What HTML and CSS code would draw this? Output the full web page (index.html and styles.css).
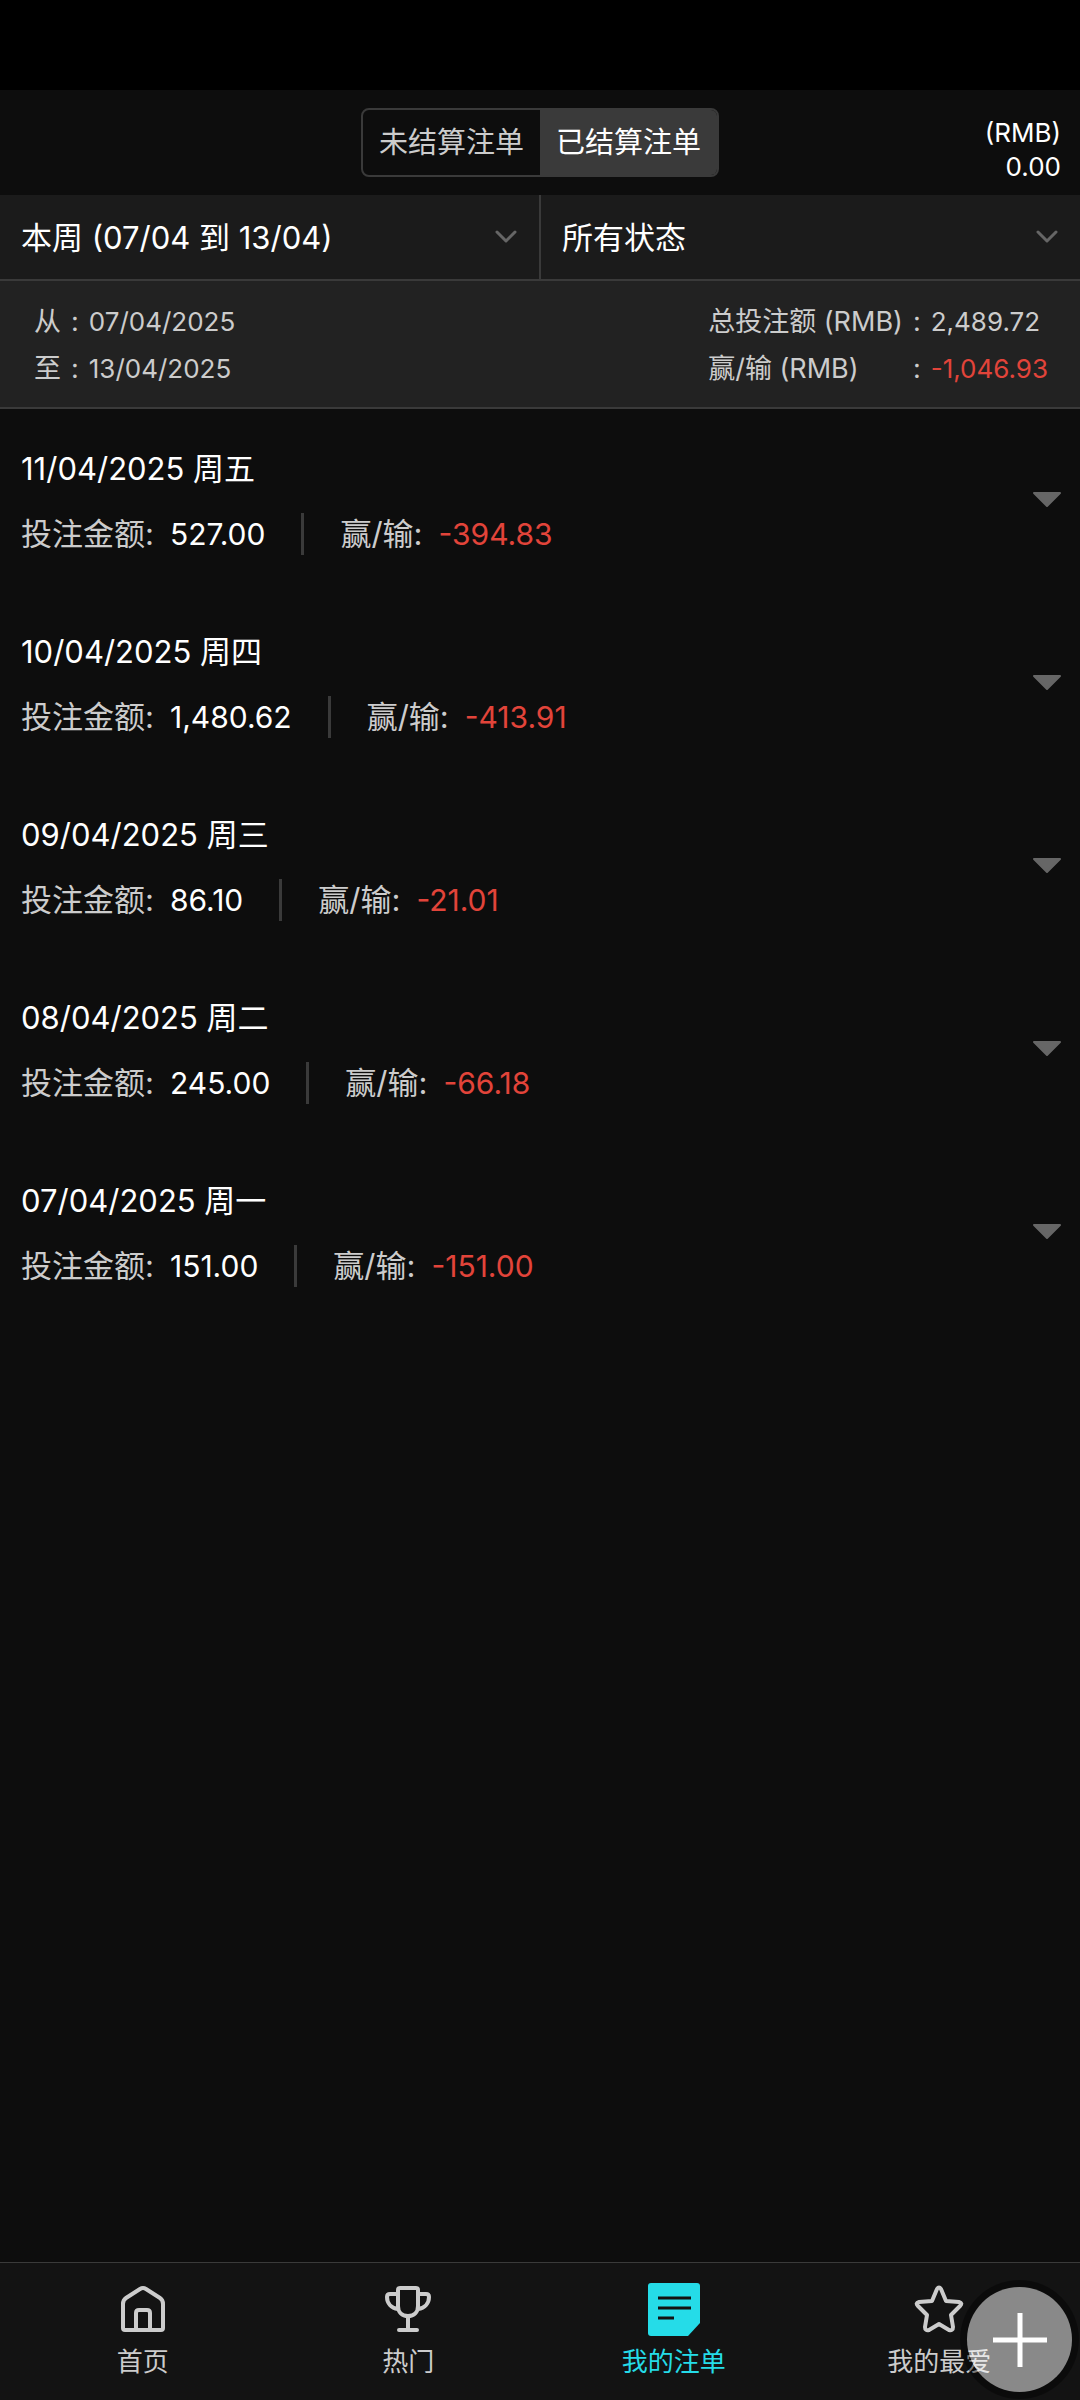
FILE: index.html
```html
<!DOCTYPE html>
<html lang="zh-CN">

<head>
    <meta charset="UTF-8">
    <meta name="viewport" content="width=device-width, initial-scale=1.0">
    <title>我的注单</title>
    <link rel="stylesheet" href="styles.css">
</head>

<body>
    <div class="status-bar"></div>

    <header class="header">
        <div class="tabs">
            <button type="button" class="tab">未结算注单</button>
            <button type="button" class="tab active">已结算注单</button>
        </div>
        <div class="balance">
            <div>(RMB)</div>
            <div>0.00</div>
        </div>
    </header>

    <div class="filters">
        <div class="filter">
            <select id="period" name="period" aria-label="日期">
                <option>本周 (07/04 到 13/04)</option>
            </select>
            <svg class="chevron" viewBox="0 0 22 14"><path d="M2 2l9 9 9-9" /></svg>
        </div>
        <div class="filter">
            <select id="status" name="status" aria-label="状态">
                <option>所有状态</option>
            </select>
            <svg class="chevron" viewBox="0 0 22 14"><path d="M2 2l9 9 9-9" /></svg>
        </div>
    </div>

    <section class="summary">
        <div class="summary-grid">
            <span>从</span><span>:</span><span class="value">07/04/2025</span>
            <span>至</span><span>:</span><span class="value">13/04/2025</span>
        </div>
        <div class="summary-grid">
            <span>总投注额 (RMB)</span><span>:</span><span class="value">2,489.72</span>
            <span>赢/输 (RMB)</span><span>:</span><span class="value loss">-1,046.93</span>
        </div>
    </section>

    <main class="list">
        <div class="day">
            <div class="day-info">
                <div class="date">11/04/2025 周五</div>
                <div class="amounts">
                    <span class="label">投注金额:</span>
                    <span class="amount">527.00</span>
                    <span class="line"></span>
                    <span class="label">赢/输:</span>
                    <span class="amount loss">-394.83</span>
                </div>
            </div>
            <button type="button" class="expand" aria-label="展开">
                <svg viewBox="0 0 28 16"><path d="M1 1h26L14 14z" /></svg>
            </button>
        </div>

        <div class="day">
            <div class="day-info">
                <div class="date">10/04/2025 周四</div>
                <div class="amounts">
                    <span class="label">投注金额:</span>
                    <span class="amount">1,480.62</span>
                    <span class="line"></span>
                    <span class="label">赢/输:</span>
                    <span class="amount loss">-413.91</span>
                </div>
            </div>
            <button type="button" class="expand" aria-label="展开">
                <svg viewBox="0 0 28 16"><path d="M1 1h26L14 14z" /></svg>
            </button>
        </div>

        <div class="day">
            <div class="day-info">
                <div class="date">09/04/2025 周三</div>
                <div class="amounts">
                    <span class="label">投注金额:</span>
                    <span class="amount">86.10</span>
                    <span class="line"></span>
                    <span class="label">赢/输:</span>
                    <span class="amount loss">-21.01</span>
                </div>
            </div>
            <button type="button" class="expand" aria-label="展开">
                <svg viewBox="0 0 28 16"><path d="M1 1h26L14 14z" /></svg>
            </button>
        </div>

        <div class="day">
            <div class="day-info">
                <div class="date">08/04/2025 周二</div>
                <div class="amounts">
                    <span class="label">投注金额:</span>
                    <span class="amount">245.00</span>
                    <span class="line"></span>
                    <span class="label">赢/输:</span>
                    <span class="amount loss">-66.18</span>
                </div>
            </div>
            <button type="button" class="expand" aria-label="展开">
                <svg viewBox="0 0 28 16"><path d="M1 1h26L14 14z" /></svg>
            </button>
        </div>

        <div class="day">
            <div class="day-info">
                <div class="date">07/04/2025 周一</div>
                <div class="amounts">
                    <span class="label">投注金额:</span>
                    <span class="amount">151.00</span>
                    <span class="line"></span>
                    <span class="label">赢/输:</span>
                    <span class="amount loss">-151.00</span>
                </div>
            </div>
            <button type="button" class="expand" aria-label="展开">
                <svg viewBox="0 0 28 16"><path d="M1 1h26L14 14z" /></svg>
            </button>
        </div>
    </main>

    <nav class="bottom-nav">
        <a href="#" class="nav-item">
            <svg viewBox="0 0 54 54">
                <path d="M7 46V22q0-4 3-6L24 7q3-2 6 0l14 9q3 2 3 6v24q0 2-2 2H9q-2 0-2-2z" />
                <path d="M20 48V31q0-3 3-3h8q3 0 3 3v17" />
            </svg>
            <span>首页</span>
        </a>
        <a href="#" class="nav-item">
            <svg viewBox="0 0 54 54">
                <path d="M19 6h16q2 0 2 2v16c0 6-4 10-10 10s-10-4-10-10V8q0-2 2-2z" />
                <path d="M16 12H9q-3 0-3 3c0 6 4 11 11 12M38 12h7q3 0 3 3c0 6-4 11-11 12M27 35v13M18 48h18" />
            </svg>
            <span>热门</span>
        </a>
        <a href="#" class="nav-item active">
            <svg viewBox="0 0 54 54">
                <path class="note" d="M4 1h46q3 0 3 3v37L41 54H4q-3 0-3-3V4q0-3 3-3z" />
                <path class="note-lines" d="M11 16h33M11 26h33M11 36h16" />
            </svg>
            <span>我的注单</span>
        </a>
        <a href="#" class="nav-item">
            <svg viewBox="0 0 54 54">
                <path d="M25 7q2-3 4 0l5 12 13 1q4 1 1 4l-9 9 2 12q0 4-4 3l-10-6-10 6q-4 1-4-3l2-12-9-9q-3-3 1-4l13-1z" />
            </svg>
            <span>我的最爱</span>
        </a>
    </nav>

    <button type="button" class="add-button" aria-label="添加">
        <svg viewBox="0 0 54 54"><path d="M27 0v54M0 27h54" /></svg>
    </button>
</body>

</html>
```

FILE: styles.css
```css
* {
    box-sizing: border-box;
}

body {
    margin: 0;
    min-height: 100vh;
    display: flex;
    flex-direction: column;
    background: #0d0d0d;
    color: #fff;
    font-family: Inter, "Noto Sans CJK SC", sans-serif;
    font-size: 31px;
    line-height: 42px;
}

button,
select {
    font-family: inherit;
    color: inherit;
    border: 0;
    background: none;
    padding: 0;
}

svg {
    display: block;
    fill: none;
    stroke: currentColor;
    stroke-linecap: round;
    stroke-linejoin: round;
}

.status-bar {
    height: 90px;
    background: #000;
}

.header {
    display: grid;
    grid-template-columns: 1fr auto 1fr;
    align-items: start;
    padding: 18px 19px 11px;
}

.tabs {
    grid-column: 2;
    display: flex;
    border: 2px solid #3a3a3a;
    border-radius: 8px;
    overflow: hidden;
}

.tab {
    width: 177px;
    height: 65px;
    padding-bottom: 5px;
    font-size: 29px;
    color: #ccc;
}

.tab.active {
    background: #3a3a3a;
    color: #fff;
}

.balance {
    padding-top: 8px;
    text-align: right;
    font-size: 26px;
    line-height: 34px;
}

.filters {
    display: flex;
    background: #1b1b1b;
    border-bottom: 2px solid #3a3a3a;
}

.filter {
    flex: 1;
    position: relative;
}

.filter + .filter {
    border-left: 2px solid #3a3a3a;
}

.filter select {
    appearance: none;
    width: 100%;
    height: 84px;
    padding: 0 60px 0 21px;
    font-size: 31px;
}

/* arrow sits over the select */
.chevron {
    position: absolute;
    right: 22px;
    top: 35px;
    width: 22px;
    height: 14px;
    stroke: #666;
    stroke-width: 3;
    pointer-events: none;
}

.summary {
    display: flex;
    justify-content: space-between;
    padding: 17px 32px 15px 34px;
    background: #222;
    border-bottom: 2px solid #3a3a3a;
    color: #ccc;
    font-size: 27px;
    line-height: 47px;
}

.summary-grid {
    display: grid;
    grid-template-columns: auto auto auto;
    column-gap: 10px;
}

.value {
    font-size: 26px;
}

.loss {
    color: #e2443a;
}

.day {
    display: flex;
    justify-content: space-between;
    align-items: center;
    padding: 39px 18px 37px 21px;
}

.amounts {
    display: flex;
    gap: 16px;
    margin-top: 23px;
}

.label {
    color: #ccc;
}

.amount {
    font-size: 30px;
}

.line {
    width: 3px;
    margin: 0 20px;
    background: #3a3a3a;
}

.expand {
    padding-bottom: 4px;
}

.expand svg {
    width: 30px;
    height: 16px;
    fill: #666;
    stroke: #666;
    stroke-width: 2;
}

.bottom-nav {
    position: sticky;
    bottom: 0;
    display: flex;
    margin-top: auto;
    padding: 19px 8px 19px 10px;
    background: #131313;
    border-top: 1px solid #3a3a3a;
}

.nav-item {
    flex: 1;
    display: flex;
    flex-direction: column;
    align-items: center;
    gap: 7px;
    color: #ccc;
    font-size: 26px;
    line-height: 38px;
    text-decoration: none;
}

.nav-item svg {
    width: 54px;
    height: 54px;
    stroke-width: 4;
}

.nav-item.active {
    color: #25dce8;
}

.note {
    fill: currentColor;
    stroke: none;
}

.note-lines {
    stroke: #131313;
    stroke-width: 3;
    stroke-linecap: butt;
}

.add-button {
    position: fixed;
    right: 8px;
    bottom: 8px;
    width: 105px;
    height: 105px;
    display: flex;
    align-items: center;
    justify-content: center;
    border-radius: 50%;
    background: rgba(255, 255, 255, 0.5);
    box-shadow: 0 0 0 7px rgba(0, 0, 0, 0.4);
}

.add-button svg {
    width: 54px;
    height: 54px;
    stroke: #fff;
    stroke-width: 5;
    stroke-linecap: butt;
}
```
